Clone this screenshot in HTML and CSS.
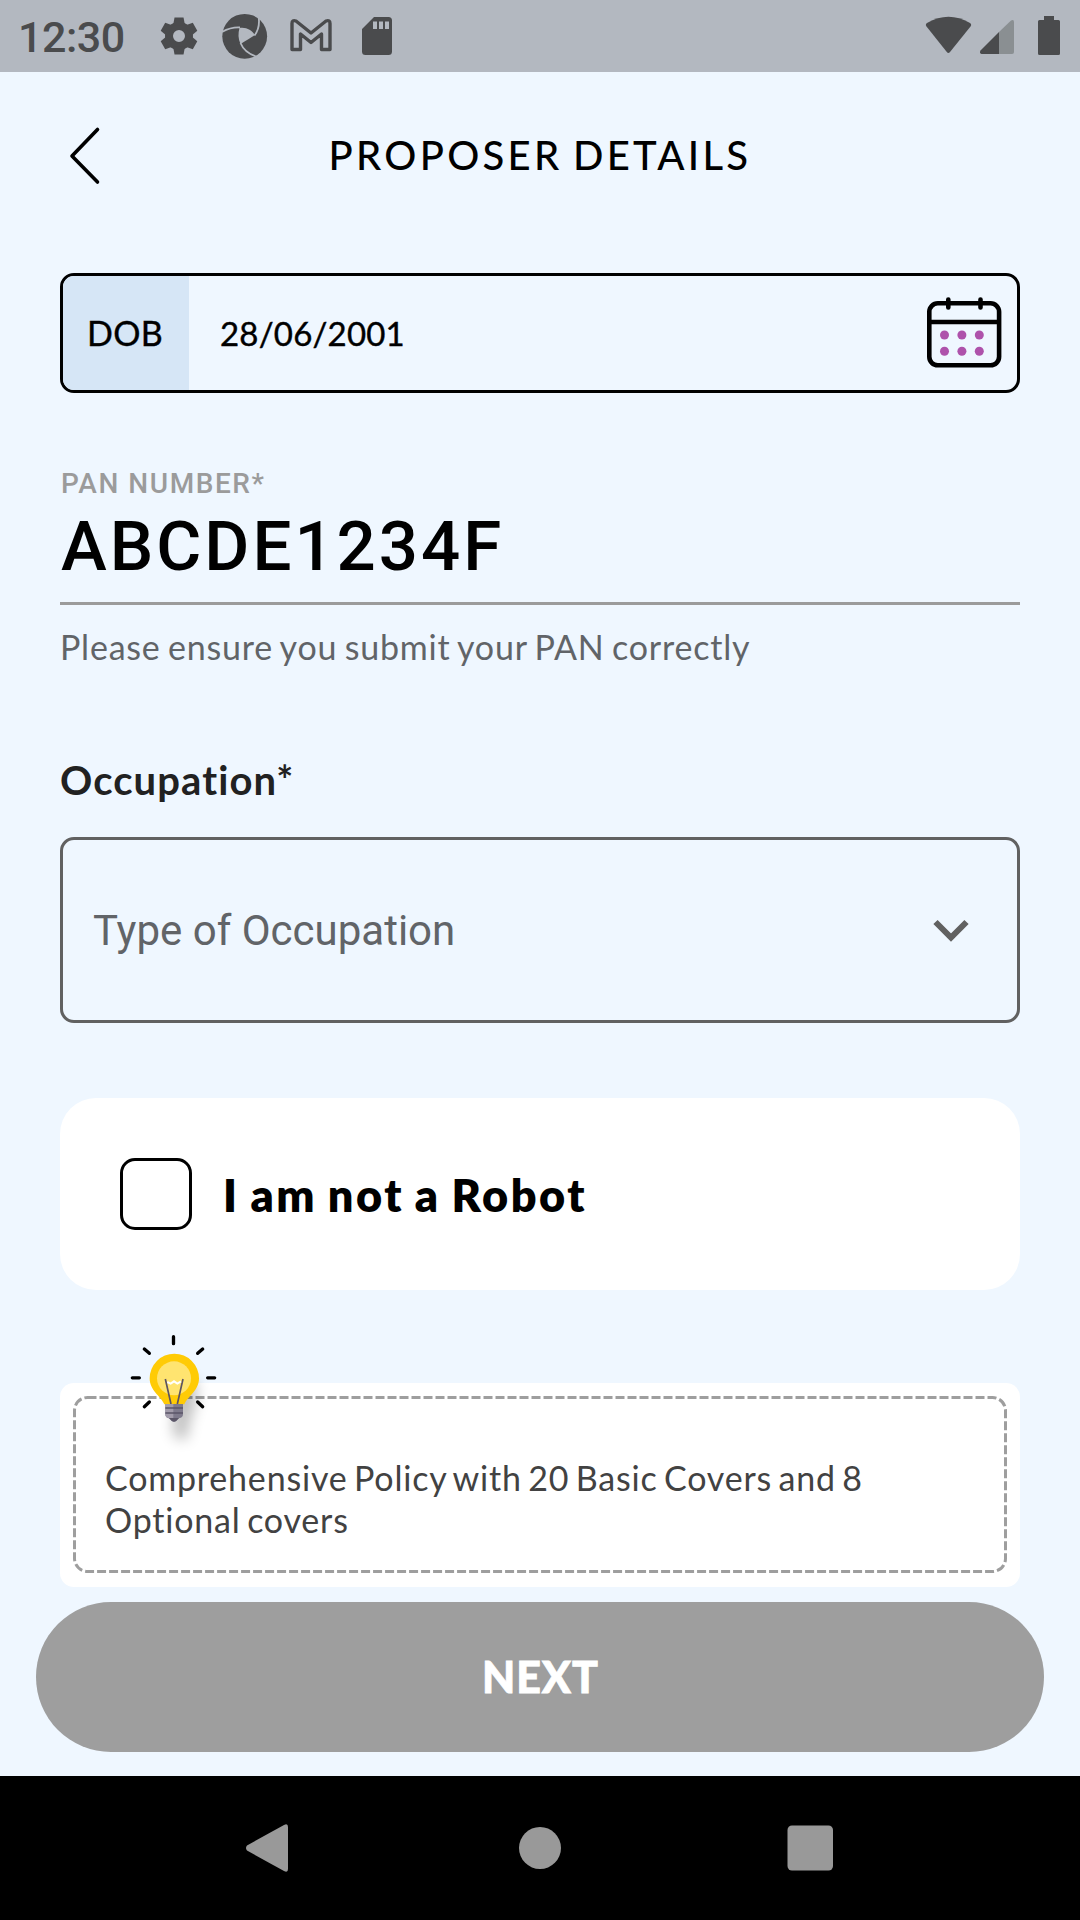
FILE: index.html
```html
<!DOCTYPE html>
<html lang="en">
<head>
<meta charset="utf-8">
<title>Proposer Details</title>
<link rel="stylesheet" href="styles.css">
</head>
<body>
<div class="screen">
  <div class="status">
    <span class="clock">12:30</span>
    <svg class="status-left" width="240" height="72" viewBox="155 0 240 72" fill="#4a4b4d">
      <g>
        <circle cx="179" cy="36" r="10" fill="none" stroke="#4a4b4d" stroke-width="8"/>
        <path d="M174.500 17.500h9l1.500 8h-12z"/>
        <path d="M174.500 17.500h9l1.500 8h-12z" transform="rotate(60 179 36)"/>
        <path d="M174.500 17.500h9l1.500 8h-12z" transform="rotate(120 179 36)"/>
        <path d="M174.500 17.500h9l1.500 8h-12z" transform="rotate(180 179 36)"/>
        <path d="M174.500 17.500h9l1.500 8h-12z" transform="rotate(240 179 36)"/>
        <path d="M174.500 17.500h9l1.500 8h-12z" transform="rotate(300 179 36)"/>
      </g>
      <g>
        <circle cx="244.700" cy="36.300" r="22.400"/>
        <path fill="#b3b8c0" d="M239.500 28c7-1 12 2 15.500 7-4 2.500-9 5.500-14.500 9-2.500-5-2.500-11-1-16z"/>
        <path fill="none" stroke="#b3b8c0" stroke-width="1.800" d="M222 32q9-5 18-4.500M254.500 35.500q6-8 4-19.500M240.500 43q4 10 17 14"/>
      </g>
      <path fill="none" stroke="#4a4b4d" stroke-width="3.400" stroke-linejoin="round" d="M292 23.500q0-4 4-2.500L311 33l15-12q4-1.500 4 2.500V49.500H321.500V34L311 42.500 300.500 34V49.500H292z"/>
      <path fill-rule="evenodd" d="M374 17h14.500a3.500 3.500 0 0 1 3.500 3.500v31a3.500 3.500 0 0 1-3.500 3.500h-23a3.500 3.500 0 0 1-3.500-3.500V29zM373 21.500v7.500h4v-7.500zm6 0v7.500h4v-7.500zm6 0v7.500h4v-7.500z"/>
    </svg>
    <svg class="status-right" width="150" height="72" viewBox="920 0 150 72" fill="#4a4b4d">
      <path d="M926.500 26.500q-1.500-2 .5-3.500 21.500-12.500 43 0 2 1.500.5 3.500L950 52q-1.600 1.800-3.200 0z"/>
      <path fill="#8a8f92" d="M999 32l12-11.500q3-1.500 3 1.500v30q0 2-2 2h-13z"/>
      <path d="M999 32v22h-17.500q-2.500-1-1-3.500z"/>
      <path d="M1044 16h10v4h4.500q1.500 0 1.500 1.500v32q0 1.500-1.500 1.500h-19q-1.500 0-1.500-1.500v-32q0-1.500 1.500-1.500h4.500z"/>
    </svg>
  </div>

  <header class="header">
    <svg class="back" width="36" height="60" viewBox="66 126 36 60" fill="none" stroke="#000" stroke-width="3.600" stroke-linecap="round" stroke-linejoin="round"><path d="M97.500 129.500L72 156l25.500 26"/></svg>
    <h1 class="title">PROPOSER DETAILS</h1>
  </header>

  <main class="form">
    <div class="dob">
      <div class="dob-label">DOB</div>
      <div class="dob-value">28/06/2001</div>
      <svg class="calendar" width="76" height="72" viewBox="926 297 76 72" fill="none" stroke="#000" stroke-width="4.600">
        <rect x="929.300" y="303.300" width="69.800" height="62" rx="8.500"/>
        <path d="M930 322h68"/>
        <path stroke-linecap="round" d="M948.300 299.500v8M980.500 299.500v8"/>
        <g fill="#ae52ab" stroke="none"><circle cx="944.500" cy="335" r="4.500"/><circle cx="961.900" cy="335" r="4.500"/><circle cx="979.300" cy="335" r="4.500"/><circle cx="944.500" cy="351.300" r="4.500"/><circle cx="961.900" cy="351.300" r="4.500"/><circle cx="979.300" cy="351.300" r="4.500"/></g>
      </svg>
    </div>

    <div class="pan">
      <div class="pan-label">PAN NUMBER*</div>
      <div class="pan-value">ABCDE1234F</div>
    </div>
    <p class="pan-help">Please ensure you submit your PAN correctly</p>

    <h2 class="section-title">Occupation*</h2>
    <div class="select">
      <span>Type of Occupation</span>
      <svg width="36" height="24" viewBox="0 0 36 24" fill="none" stroke="#616161" stroke-width="6"><path d="M2.500 3l15.500 15.500 15.500-15.500"/></svg>
    </div>

    <label class="robot"><span class="checkbox"></span><span class="robot-text">I am not a Robot</span></label>

    <div class="hint">
      <svg class="hint-border" width="960" height="204" viewBox="0 0 960 204"><rect x="14.500" y="14.500" width="931" height="174" rx="13" fill="none" stroke="#9e9e9e" stroke-width="3" stroke-dasharray="9 3"/></svg>
      <p class="hint-text">Comprehensive Policy with 20 Basic Covers and 8<br>Optional covers</p>
      <svg class="bulb" width="130" height="140" viewBox="0 0 390 420">
        <defs><filter id="soft" x="-60%" y="-60%" width="220%" height="220%"><feGaussianBlur stdDeviation="20"/></filter></defs>
        <path fill="#000" opacity=".25" filter="url(#soft)" d="M190 200q60-60 70 10 0 50-20 90l-10 60-40-10z"/>
        <path stroke="#000" stroke-width="10" stroke-linecap="round" d="M190.500 50v21M103 87l15 13M278 87l-15 13M67 173.500h21M293 173.500h21M118 246l-15 14M263 246l15 14"/>
        <path fill="#ffcb05" d="M193 101a74 74 0 0 1 74 74c0 37-33 53-44 78h-60c-11-25-44-41-44-78a74 74 0 0 1 74-74z"/>
        <circle cx="192" cy="175" r="51" fill="#ffe470"/>
        <path fill="none" stroke="#5d5360" stroke-width="5" d="M166 177l17 75M219 177l-17 75"/>
        <path fill="none" stroke="#fff" stroke-width="6" d="M172 186l10 5 10-7 10 7 11-7"/>
        <path fill="#7e7a8c" d="M166 252h53v31q0 10-12 12l-8 8q-7 5-14 0l-8-8q-11-2-11-12z"/>
        <path fill="#a29cab" d="M166 252h24v43h-13q-11-2-11-12z"/>
        <path stroke="#5b5668" stroke-width="5" d="M166 264h53M166 279h53"/>
        <path fill="#5b5668" d="M177 294h30l-9 9q-6 4-12 0z"/>
      </svg>
    </div>
  </main>

  <button class="next">NEXT</button>

  <nav class="nav">
    <svg width="1080" height="144" viewBox="0 0 1080 144" fill="#999">
      <path d="M247 69.500L284 49q4-2 4 2v42q0 4-4 2L247 74.500q-2-2.500 0-5z"/>
      <circle cx="540" cy="72" r="21"/>
      <rect x="787.500" y="49.500" width="45.500" height="45" rx="4.500"/>
    </svg>
  </nav>
</div>
</body>
</html>
```
FILE: styles.css
```css
* { box-sizing: border-box; }
body { margin: 0; background: #eff7ff; font-family: Lato, "Noto Sans", sans-serif; color: #000; }
.screen { width: 1080px; height: 1920px; display: flex; flex-direction: column; overflow: hidden; background: #eff7ff; }

.status { height: 72px; flex: none; display: flex; align-items: center; background: #b3b8c0; }
.clock { width: 137px; margin-left: 18px; padding-top: 1px; font: 500 43px/72px Roboto, sans-serif; letter-spacing: -.5px; color: #4a4b4d; white-space: nowrap; }
.status-right { margin-left: auto; margin-right: 10px; }

.header { height: 168px; flex: none; display: grid; grid-template-columns: 66px 36px 1fr 102px; align-items: center; }
.back { grid-column: 2; }
.title { grid-column: 3; margin: 0; padding-bottom: 2px; text-align: center; font-size: 40px; line-height: 48px; font-weight: 500; letter-spacing: 3.3px; word-spacing: -3px; }

.form { padding: 33px 60px 0; }
.dob { height: 120px; display: flex; align-items: center; border: 3px solid #000; border-radius: 14px; overflow: hidden; }
.dob-label { align-self: stretch; width: 126px; display: flex; align-items: center; padding: 0 0 1px 24px; background: #d6e6f6; font-size: 34px; font-weight: 400; letter-spacing: .3px; -webkit-text-stroke: .4px #000; }
.dob-value { flex: 1; padding: 0 0 1px 31px; font-size: 33px; font-weight: 400; letter-spacing: .2px; -webkit-text-stroke: .4px #000; }
.calendar { margin-right: 15px; }

.pan { height: 159px; margin-top: 53px; padding: 22px 0 0 1px; border-bottom: 3px solid #9b9b9b; font-family: Roboto, sans-serif; font-weight: 500; }
.pan-label { font-size: 28px; line-height: 32px; letter-spacing: 1.55px; color: #9b9b9b; }
.pan-value { font-size: 69px; line-height: 80px; letter-spacing: 3px; margin-top: 7px; }
.pan-help { margin: 20px 0 0; font-size: 34px; line-height: 44px; letter-spacing: .78px; word-spacing: -2px; color: #616468; }

.section-title { margin: 86px 0 0; font-size: 40px; line-height: 50px; font-weight: 700; letter-spacing: 1.1px; color: #212121; }
.select { height: 186px; margin-top: 32px; padding: 2px 48px 0 30px; display: flex; align-items: center; justify-content: space-between; border: 3px solid #616161; border-radius: 14px; font: 400 42px/50px Roboto, sans-serif; color: #616468; }

.robot { height: 192px; margin-top: 75px; padding-left: 60px; display: flex; align-items: center; gap: 31px; background: #fff; border-radius: 36px; }
.checkbox { width: 72px; height: 72px; border: 3px solid #000; border-radius: 15px; }
.robot-text { padding-top: 1px; font-size: 45px; line-height: 56px; font-weight: 800; letter-spacing: 2.5px; word-spacing: -2px; }

.hint { position: relative; height: 204px; margin-top: 93px; padding: 74px 45px 0; background: #fff; border-radius: 14px; }
.hint-border { position: absolute; left: 0; top: 0; }
.hint-text { margin: 0; font-size: 34px; line-height: 42px; letter-spacing: .8px; word-spacing: -3px; color: #424242; white-space: nowrap; }
.bulb { position: absolute; left: 50px; top: -63px; }

.next { width: 1008px; height: 150px; margin: 15px 36px 24px; padding: 0 0 2px 1px; flex: none; border: 0; border-radius: 75px; background: #9e9e9e; color: #fff; font-family: Lato, sans-serif; font-size: 43px; font-weight: 900; letter-spacing: 1px; -webkit-text-stroke: .8px #fff; }
.nav { height: 144px; flex: none; background: #000; }
```
